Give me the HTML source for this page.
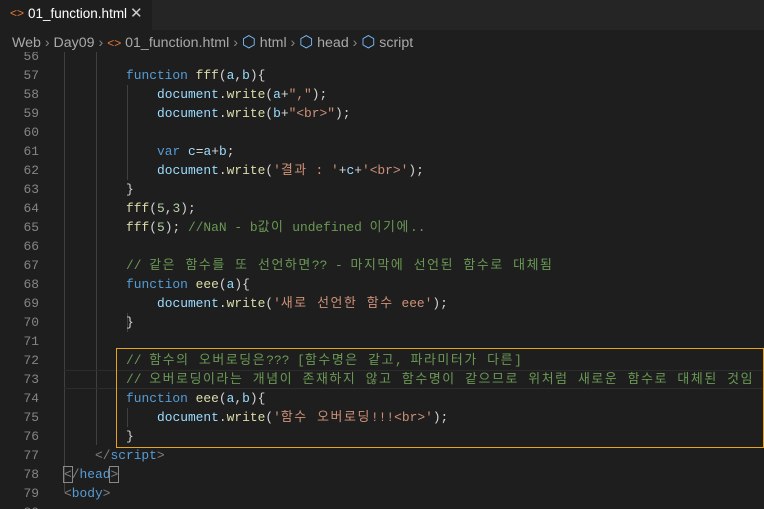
<!DOCTYPE html>
<html><head><meta charset="utf-8"><style>
*{margin:0;padding:0;box-sizing:border-box}
body{width:764px;height:509px;overflow:hidden;background:#1e1e1e;position:relative;font-family:"Liberation Sans","Noto Sans CJK KR",sans-serif}
.tabbar{position:absolute;left:0;top:0;width:764px;height:30px;background:#252526}
.tab{position:absolute;left:0;top:0;width:152px;height:30px;background:#1e1e1e;color:#fff;font-size:13.5px}
.bc{position:absolute;left:0;top:30px;width:764px;height:22px;background:#1e1e1e;color:#a9a9a9;font-size:14.2px;white-space:nowrap}
.code{position:absolute;left:0;top:52px;width:764px;height:457px;overflow:hidden}
.ln{position:absolute;left:0;width:39px;text-align:right;color:#858585;font:12.9px/19px "Liberation Mono","Noto Sans CJK KR",monospace}
.l{position:absolute;white-space:pre;color:#d4d4d4;font:12.9px/19px "Liberation Mono","Noto Sans CJK KR",monospace}
.k{letter-spacing:1.6px}
.kw{color:#569cd6}.fn{color:#dcdcaa}.p{color:#9cdcfe}.s{color:#ce9178}.c{color:#6a9955}.g{color:#808080}.n{color:#b5cea8}
.guide{position:absolute;width:1px;background:#404040}
.ic{color:#75beff;font-size:16px}
</style></head><body>
<div class="tabbar"><div class="tab">
<span style="position:absolute;left:10px;top:6px;color:#e37933;font-size:12px">&lt;&gt;</span>
<span style="position:absolute;left:28px;top:6px">01_function.html</span>
<span style="position:absolute;left:130px;top:4px;font-size:15px;color:#ccc">✕</span></div></div>
<div class="bc"><span style="position:absolute;left:12px;top:2px">Web <span style="color:#888">›</span> Day09 <span style="color:#888">›</span> <span style="color:#e37933;font-size:12px">&lt;&gt;</span> 01_function.html <span style="color:#888">›</span> <span class="ic">⬡</span> html <span style="color:#888">›</span> <span class="ic">⬡</span> head <span style="color:#888">›</span> <span class="ic">⬡</span> script</span></div>
<div class="code">
<div class="guide" style="left:64px;top:0;height:440px"></div>
<div class="guide" style="left:96px;top:0;height:393px"></div>
<div class="guide" style="left:127px;top:33px;height:95px"></div>
<div class="guide" style="left:127px;top:261px;height:19px"></div>
<div class="guide" style="left:127px;top:356px;height:19px"></div>
<div style="position:absolute;left:64px;top:318px;width:700px;height:19px;border-top:1px solid #2c2c2c;border-bottom:1px solid #2c2c2c"></div>
<div style="position:absolute;left:116px;top:296px;width:648px;height:100px;border:1px solid #e8a317"></div>
<div class="ln" style="top:-5px">56</div><div class="ln" style="top:14px">57</div><div class="ln" style="top:33px">58</div><div class="ln" style="top:52px">59</div><div class="ln" style="top:71px">60</div><div class="ln" style="top:90px">61</div><div class="ln" style="top:109px">62</div><div class="ln" style="top:128px">63</div><div class="ln" style="top:147px">64</div><div class="ln" style="top:166px">65</div><div class="ln" style="top:185px">66</div><div class="ln" style="top:204px">67</div><div class="ln" style="top:223px">68</div><div class="ln" style="top:242px">69</div><div class="ln" style="top:261px">70</div><div class="ln" style="top:280px">71</div><div class="ln" style="top:299px">72</div><div class="ln" style="top:318px">73</div><div class="ln" style="top:337px">74</div><div class="ln" style="top:356px">75</div><div class="ln" style="top:375px">76</div><div class="ln" style="top:394px">77</div><div class="ln" style="top:413px">78</div><div class="ln" style="top:432px">79</div><div class="ln" style="top:451px">80</div>
<div class="l" style="left:126px;top:14px"><span class="kw">function</span> <span class="fn">fff</span>(<span class="p">a</span>,<span class="p">b</span>){</div>
<div class="l" style="left:157px;top:33px"><span class="p">document</span>.<span class="fn">write</span>(<span class="p">a</span>+<span class="s">","</span>);</div>
<div class="l" style="left:157px;top:52px"><span class="p">document</span>.<span class="fn">write</span>(<span class="p">b</span>+<span class="s">"&lt;br&gt;"</span>);</div>
<div class="l" style="left:157px;top:90px"><span class="kw">var</span> <span class="p">c</span>=<span class="p">a</span>+<span class="p">b</span>;</div>
<div class="l" style="left:157px;top:109px"><span class="p">document</span>.<span class="fn">write</span>(<span class="s">'<span class="k">결과</span> : '</span>+<span class="p">c</span>+<span class="s">'&lt;br&gt;'</span>);</div>
<div class="l" style="left:126px;top:128px">}</div>
<div class="l" style="left:126px;top:147px"><span class="fn">fff</span>(<span class="n">5</span>,<span class="n">3</span>);</div>
<div class="l" style="left:126px;top:166px"><span class="fn">fff</span>(<span class="n">5</span>); <span class="c">//NaN - b<span class="k">값이</span> undefined <span class="k">이기에</span>..</span></div>
<div class="l c" style="left:126px;top:204px">// <span class="k">같은 함수를 또 선언하면</span>?? - <span class="k">마지막에 선언된 함수로 대체됨</span></div>
<div class="l" style="left:126px;top:223px"><span class="kw">function</span> <span class="fn">eee</span>(<span class="p">a</span>){</div>
<div class="l" style="left:157px;top:242px"><span class="p">document</span>.<span class="fn">write</span>(<span class="s">'<span class="k">새로 선언한 함수</span> eee'</span>);</div>
<div class="l" style="left:126px;top:261px">}</div>
<div class="l c" style="left:126px;top:299px">// <span class="k">함수의 오버로딩은</span>??? [<span class="k">함수명은 같고</span>, <span class="k">파라미터가 다른</span>]</div>
<div class="l c" style="left:126px;top:318px">// <span class="k">오버로딩이라는 개념이 존재하지 않고 함수명이 같으므로 위처럼 새로운 함수로 대체된 것임</span></div>
<div class="l" style="left:126px;top:337px"><span class="kw">function</span> <span class="fn">eee</span>(<span class="p">a</span>,<span class="p">b</span>){</div>
<div class="l" style="left:157px;top:356px"><span class="p">document</span>.<span class="fn">write</span>(<span class="s">'<span class="k">함수 오버로딩</span>!!!&lt;br&gt;'</span>);</div>
<div class="l" style="left:126px;top:375px">}</div>
<div class="l" style="left:95px;top:394px"><span class="g">&lt;/</span><span class="kw">script</span><span class="g">&gt;</span></div>
<div class="l" style="left:64px;top:413px"><span class="g" style="outline:1px solid #888">&lt;</span><span class="g">/</span><span class="kw">head</span><span class="g" style="outline:1px solid #888">&gt;</span></div>
<div class="l" style="left:64px;top:432px"><span class="g">&lt;</span><span class="kw">body</span><span class="g">&gt;</span></div>
</div>
</body></html>
